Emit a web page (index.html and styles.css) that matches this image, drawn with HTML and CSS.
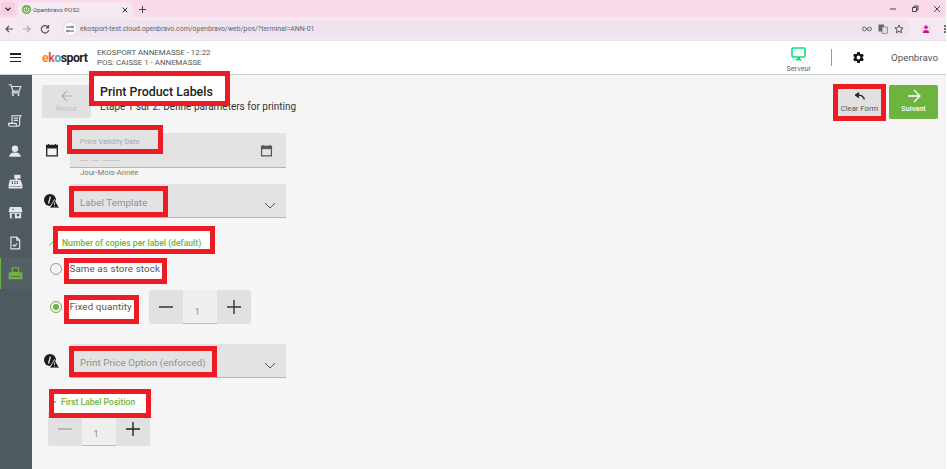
FILE: index.html
```html
<!DOCTYPE html>
<html lang="en">
<head>
<meta charset="utf-8">
<title>Openbravo POS2</title>
<link rel="stylesheet" href="styles.css">
</head>
<body>
<div class="page">
<div class="tabbar">
  <div class="tab-menu"><svg width="8" height="8" viewBox="0 0 8 8"><path d="M1.500 2.800l2.500 2.500 2.500-2.500" fill="none" stroke="#333" stroke-width="1.300"/></svg></div>
  <div class="tab">
    <svg class="favicon" width="9" height="9" viewBox="0 0 10 10"><circle cx="5" cy="5" r="5" fill="#6db33f"/><path d="M3.200 3.200a2.600 2.600 0 1 0 3.600 0M5 2v3" fill="none" stroke="#fff" stroke-width="1"/></svg>
    <span class="tab-title">Openbravo POS2</span>
    <svg class="tab-close" width="6" height="6" viewBox="0 0 6 6"><path d="M.7.700l4.600 4.600M5.300.700L.7 5.300" stroke="#333" stroke-width="1"/></svg>
  </div>
  <svg class="tab-new" width="7" height="7" viewBox="0 0 7 7"><path d="M3.500 0v7M0 3.500h7" stroke="#444" stroke-width="1"/></svg>
  <div class="win-controls">
    <svg width="8" height="8" viewBox="0 0 8 8"><path d="M1 4h6" stroke="#444" stroke-width="1"/></svg>
    <svg width="8" height="8" viewBox="0 0 8 8"><path d="M1.500 2.500h4v4h-4zM3 2.500v-1.500h4v4h-1" fill="none" stroke="#444" stroke-width="1"/></svg>
    <svg width="8" height="8" viewBox="0 0 8 8"><path d="M1 1l6 6M7 1l-6 6" stroke="#444" stroke-width="1"/></svg>
  </div>
</div>
<div class="toolbar">
  <svg width="10" height="10" viewBox="0 0 10 10"><path d="M9 5H2M5 2L2 5l3 3" fill="none" stroke="#555" stroke-width="1.200"/></svg>
  <svg width="10" height="10" viewBox="0 0 10 10"><path d="M1 5h7M5 2l3 3-3 3" fill="none" stroke="#aaa" stroke-width="1.200"/></svg>
  <svg width="10" height="10" viewBox="0 0 10 10"><path d="M8.300 3.500A3.700 3.700 0 1 0 8.700 6M8.500 1v2.800H5.800" fill="none" stroke="#555" stroke-width="1.200"/></svg>
  <div class="omnibox">
    <span class="site-icon"><svg width="8" height="8" viewBox="0 0 8 8"><path d="M0 2h5M7 2h1M0 6h1M3 6h5" stroke="#555" stroke-width="1"/><circle cx="6" cy="2" r="1" fill="none" stroke="#555" stroke-width=".8"/><circle cx="2" cy="6" r="1" fill="none" stroke="#555" stroke-width=".8"/></svg></span>
    <span class="url">ekosport-test.cloud.openbravo.com/openbravo/web/pos/?terminal=ANN-01</span>
    <span class="omni-actions">
      <svg width="10" height="6" viewBox="0 0 10 6"><circle cx="2.500" cy="3" r="1.900" fill="none" stroke="#666"/><circle cx="7.500" cy="3" r="1.900" fill="none" stroke="#666"/><path d="M4 3h2" stroke="#666"/></svg>
      <svg width="10" height="10" viewBox="0 0 10 10"><rect x="0.500" y="0.500" width="5.500" height="7" fill="#666"/><rect x="4" y="3" width="5.500" height="6.500" fill="#ddd" stroke="#666" stroke-width=".6"/></svg>
      <svg width="10" height="10" viewBox="0 0 10 10"><path d="M5 1l1.200 2.700 2.900.3-2.200 1.900.7 2.900L5 7.300 2.400 8.800l.7-2.900L.9 4l2.900-.3z" fill="none" stroke="#444" stroke-width=".9"/></svg>
    </span>
  </div>
  <span class="avatar"><svg width="8" height="8" viewBox="0 0 8 8"><circle cx="4" cy="2.300" r="1.700" fill="#c2188b"/><path d="M0.800 8c0-2 1.400-3 3.200-3s3.200 1 3.200 3z" fill="#c2188b"/></svg></span>
  <span class="kebab"><i></i><i></i><i></i></span>
</div>

<header class="app-header">
  <button class="hamburger" aria-label="Menu"><i></i><i></i><i></i></button>
  <div class="logo"><span class="logo-e">e</span><span class="logo-k">k</span><span class="logo-o">o</span><span class="logo-s">sport</span></div>
  <div class="store-info">
    <div>EKOSPORT ANNEMASSE - 12:22</div>
    <div>POS: CAISSE 1 - ANNEMASSE</div>
  </div>
  <div class="server">
    <svg width="15" height="14" viewBox="0 0 15 14"><rect x="1" y="1" width="13" height="9" rx="1" fill="none" stroke="#00e676" stroke-width="1.600"/><path d="M4.500 13.500h6V12h-6z" fill="#00e676"/><path d="M6 10h3v2H6z" fill="#00e676"/></svg>
    <span>Serveur</span>
  </div>
  <div class="header-divider"></div>
  <svg class="gear" width="13" height="13" viewBox="0 0 24 24"><path fill="#111" d="M19.400 13c.04-.3.100-.7.100-1s-.03-.7-.1-1l2.100-1.600c.2-.15.250-.4.120-.64l-2-3.460c-.12-.22-.4-.3-.6-.22l-2.500 1a7 7 0 0 0-1.700-1l-.4-2.650A.5.500 0 0 0 13.900 2h-4a.5.500 0 0 0-.5.420L9 5.070a7.700 7.700 0 0 0-1.700 1l-2.500-1c-.2-.08-.48 0-.6.220l-2 3.460c-.13.220-.07.490.12.640L4.500 11c-.05.3-.1.700-.1 1s.03.700.1 1l-2.100 1.600c-.2.150-.250.400-.12.640l2 3.460c.12.220.4.300.6.220l2.500-1c.5.400 1.100.700 1.700 1l.4 2.650c.04.240.25.420.5.420h4c.25 0 .46-.18.5-.42l.4-2.650a7.700 7.700 0 0 0 1.700-1l2.500 1c.22.080.48 0 .6-.22l2-3.460c.12-.22.070-.49-.12-.64zM12 15.500a3.500 3.500 0 1 1 0-7 3.500 3.500 0 0 1 0 7z"/></svg>
  <div class="user-name">Openbravo</div>
</header>

<div class="app-body">
  <nav class="sidebar">
    <a class="nav-item"><svg width="14" height="14" viewBox="0 0 24 24"><path fill="none" stroke="#e4e6e7" stroke-width="2" d="M1 3h4l3.500 11h10.500l3-8H6.500M8.500 14l-1.500 3h13"/><circle cx="8.500" cy="20.500" r="1.800" fill="#e4e6e7"/><circle cx="18" cy="20.500" r="1.800" fill="#e4e6e7"/></svg></a>
    <a class="nav-item"><svg width="14" height="14" viewBox="0 0 24 24"><path fill="none" stroke="#e4e6e7" stroke-width="2" d="M7 16V3h15l-2 3v12a3 3 0 0 1-3 3H4a3 3 0 0 1-3-3v-2h13v2a3 3 0 0 0 3 3M10 7h7M10 11h7"/></svg></a>
    <a class="nav-item"><svg width="14" height="14" viewBox="0 0 24 24"><circle cx="12" cy="8" r="5.500" fill="#e4e6e7"/><path fill="#e4e6e7" d="M2 22c0-5 4.500-7.500 10-7.500S22 17 22 22z"/></svg></a>
    <a class="nav-item"><svg width="15" height="15" viewBox="0 0 24 24"><path fill="#e4e6e7" d="M10 1h10v6h-5v2h5l3 8v6H1v-6l2-8h9V7h-2z"/><path fill="#4f5960" d="M6 11h2v2H6zM10 11h2v2h-2zM14 11h2v2h-2zM6 14h2v2H6zM10 14h2v2h-2zM14 14h2v2h-2zM3 19h18v1H3z"/></svg></a>
    <a class="nav-item"><svg width="15" height="15" viewBox="0 0 24 24"><path fill="#e4e6e7" d="M3 3h18l2 7a3 3 0 0 1-2 2.800V21H3v-8.200A3 3 0 0 1 1 10z"/><path fill="#4f5960" d="M6 14h5v7H6zM14 14h4v4h-4zM1 11h22v.8H1zM7 6h2v2H7z"/></svg></a>
    <a class="nav-item"><svg width="14" height="14" viewBox="0 0 24 24"><path fill="none" stroke="#e4e6e7" stroke-width="2" d="M5 2h10l5 5v15H5zM15 2v5h5M8.500 15l2.500 2.500 4.500-4.500"/></svg></a>
    <a class="nav-item nav-active"><svg width="15" height="15" viewBox="0 0 24 24"><path fill="#6db33f" d="M6 2h12v8h3a2 2 0 0 1 2 2v9H1v-9a2 2 0 0 1 2-2h3z"/><path fill="#4f5960" d="M8 4h8v5H8zM4 16h16v1H4z"/></svg></a>
  </nav>

  <main class="content">
    <div class="top-row">
      <button class="btn-back">
        <svg width="14" height="12" viewBox="0 0 16 14"><path d="M15 7H2M8 1L2 7l6 6" fill="none" stroke="#a9aeb0" stroke-width="1.300"/></svg>
        <span>Retour</span>
      </button>
      <div class="titles">
        <h1 class="above">Print Product Labels</h1>
        <p>Etape 1 sur 2. Define parameters for printing</p>
      </div>
      <div class="top-actions">
        <button class="btn-clear">
          <svg width="13" height="8" viewBox="0 0 13 9"><path d="M5.500.600L1.500 3.500l4 2.900z" fill="#222" stroke="#222" stroke-width="1"/><path d="M12 8.500C11 5 8.500 3.500 5.500 3.500" fill="none" stroke="#222" stroke-width="1.500"/></svg>
          <span>Clear Form</span>
        </button>
        <button class="btn-next">
          <svg width="14" height="14" viewBox="0 0 14 14"><path d="M1 7h11.500M7 1l6 6-6 6" fill="none" stroke="#fff" stroke-width="1.300"/></svg>
          <span>Suivant</span>
        </button>
      </div>
    </div>

    <div class="form">
      <div class="row-date">
        <svg class="field-icon" width="14" height="14" viewBox="0 0 14 14"><path d="M1.700 2.500h10.600v10.300H1.700z" fill="none" stroke="#222" stroke-width="1.300"/><path d="M1.500 2.500h11V5h-11zM3.500 1v2M10.500 1v2" stroke="#222" fill="#222"/></svg>
        <div class="field-col">
          <div class="field field-date">
            <div class="date-texts">
              <span class="field-small above">Price Validity Date</span>
              <span class="date-mask">__ __ ____</span>
            </div>
            <svg width="13" height="13" viewBox="0 0 14 14"><path d="M1.700 2.500h10.600v10.300H1.700z" fill="none" stroke="#555" stroke-width="1.300"/><path d="M1.500 2.500h11V5h-11zM3.500 1v2M10.500 1v2" stroke="#555" fill="#555"/></svg>
          </div>
          <div class="hint">Jour-Mois-Année</div>
        </div>
      </div>

      <div class="row-select">
        <svg class="field-icon" width="16" height="14" viewBox="0 0 16 14"><use href="#warn"/></svg>
        <div class="field field-select">
          <span class="field-label above">Label Template</span>
          <svg class="chevron" width="12" height="7" viewBox="0 0 12 7"><path d="M1 1l5 5 5-5" fill="none" stroke="#555" stroke-width="1"/></svg>
        </div>
      </div>

      <div class="section-title section-copies">
        <svg class="sec-check" width="5" height="5" viewBox="0 0 5 5"><path d="M0 4.500L4 1" stroke="#6db33f" stroke-width="1"/></svg>
        <span class="above">Number of copies per label (default)</span>
      </div>
      <div class="radio-row radio-first">
        <span class="radio"></span>
        <span class="radio-label above">Same as store stock</span>
      </div>
      <div class="radio-row radio-second">
        <span class="radio radio-on"></span>
        <span class="radio-label above">Fixed quantity</span>
        <div class="stepper stepper-a">
          <span class="step-btn"><svg width="14" height="2" viewBox="0 0 14 2"><path d="M0 1h14" stroke="#333" stroke-width="1.400"/></svg></span>
          <span class="step-value">1</span>
          <span class="step-btn"><svg width="14" height="14" viewBox="0 0 14 14"><path d="M0 7h14M7 0v14" stroke="#333" stroke-width="1.400"/></svg></span>
        </div>
      </div>

      <div class="row-select row-price">
        <svg class="field-icon" width="16" height="14" viewBox="0 0 16 14"><use href="#warn"/></svg>
        <div class="field field-select">
          <span class="field-label above">Print Price Option (enforced)</span>
          <svg class="chevron" width="12" height="7" viewBox="0 0 12 7"><path d="M1 1l5 5 5-5" fill="none" stroke="#555" stroke-width="1"/></svg>
        </div>
      </div>

      <div class="section-title section-position">
        <i class="sec-dot above"></i>
        <span class="above">First Label Position</span>
      </div>
      <div class="stepper stepper-b">
        <span class="step-btn"><svg width="14" height="2" viewBox="0 0 14 2"><path d="M0 1h14" stroke="#aaa" stroke-width="1.400"/></svg></span>
        <span class="step-value">1</span>
        <span class="step-btn"><svg width="14" height="14" viewBox="0 0 14 14"><path d="M0 7h14M7 0v14" stroke="#222" stroke-width="1.400"/></svg></span>
      </div>
    </div>
  </main>
</div>
</div>

<svg class="defs" width="0" height="0"><defs>
  <g id="warn"><circle cx="6" cy="6" r="6" fill="#1a1a1a"/><path d="M6.500 2.500L4.500 9.500" fill="none" stroke="#f5f5f5" stroke-width="1.200"/><path d="M10.500 5.500l5 8.500h-10z" fill="#1a1a1a" stroke="#f5f5f5" stroke-width=".8"/><path d="M10.500 8.500v2.500M10.500 11.800v1" stroke="#f5f5f5" stroke-width=".8"/></g>
</defs></svg>

<div class="mark m-title"></div>
<div class="mark m-clear"></div>
<div class="mark m-date"></div>
<div class="mark m-template"></div>
<div class="mark m-copies"></div>
<div class="mark m-same"></div>
<div class="mark m-fixed"></div>
<div class="mark m-price"></div>
<div class="mark m-first"></div>
</body>
</html>
```
FILE: styles.css
```css
* { box-sizing: border-box; }
html, body { margin: 0; height: 100%; }
body {
  position: relative;
  width: 947px;
  height: 469px;
  overflow: hidden;
  font-family: Roboto, "Liberation Sans", sans-serif;
  background: #fff;
  color: #222;
}
.page { width: 946px; height: 469px; background: #f5f5f5; }
button { font-family: inherit; border: 0; padding: 0; }
.defs { position: absolute; }
.above { position: relative; z-index: 2; }

/* Browser chrome */
.tabbar {
  height: 17px;
  background: #fad9ea;
  display: flex;
  align-items: flex-end;
  padding-left: 1px;
}
.tab-menu {
  width: 14px; height: 13px; margin-bottom: 2px;
  background: #f5cfe2; border-radius: 4px;
  display: flex; align-items: center; justify-content: center;
}
.tab {
  width: 115px; height: 15px; margin-left: 3px;
  background: #f4e8f1; border-radius: 5px 5px 0 0;
  display: flex; align-items: center; padding-left: 4px; gap: 2px;
}
.tab-title { font-size: 6.200px; color: #555; flex: 1; }
.tab-close { margin-right: 5px; }
.tab-new { margin: 0 0 4px 6px; }
.win-controls { margin-left: auto; display: flex; gap: 14px; align-self: center; padding-right: 5px; }
.toolbar {
  height: 24px;
  background: #f4e8f1;
  display: flex;
  align-items: center;
  padding-left: 4px;
  gap: 8px;
  border-bottom: 1px solid #e8e0e6;
}
.omnibox {
  width: 850px; height: 17px; margin-left: 3px; margin-right: 2px; flex: none;
  background: #efe3ee; border-radius: 9px;
  display: flex; align-items: center;
  padding-left: 3px;
}
.site-icon {
  width: 12px; height: 12px; border-radius: 50%; background: #fff; flex: none;
  display: flex; align-items: center; justify-content: center;
}
.url { font-size: 6.950px; color: #5f6368; margin-left: 4px; white-space: nowrap; }
.omni-actions { margin-left: auto; display: flex; align-items: center; gap: 6px; padding-right: 7px; }
.avatar {
  width: 10px; height: 10px; border-radius: 50%; background: #f5d7ea;
  display: flex; align-items: center; justify-content: center;
  flex: none;
}
.kebab { display: flex; flex-direction: column; gap: 1px; margin-left: 5px; flex: none; }
.kebab i { width: 2px; height: 2px; border-radius: 50%; background: #444; display: block; }

/* App header */
.app-header {
  height: 34px;
  background: #fff;
  border-bottom: 1px solid #cfcfcf;
  display: flex;
  align-items: center;
}
.hamburger {
  width: 11px; height: 9px; margin-left: 10px; background: none; flex: none;
  display: flex; flex-direction: column; justify-content: space-between;
}
.hamburger i { display: block; height: 1.500px; background: #222; }
.logo { margin-left: 21px; font-size: 12.300px; font-weight: 700; letter-spacing: -.5px; width: 45px; }
.logo-e { color: #f0862d; }
.logo-k { color: #e8503a; }
.logo-o { color: #4aa8d8; }
.logo-s { color: #222; }
.store-info { margin-left: 10px; font-size: 7.900px; line-height: 10px; color: #555; }
.server {
  margin-left: auto;
  display: flex; flex-direction: column; align-items: center; gap: 3px;
  font-size: 7.300px; color: #666; margin-top: 4px;
}
.header-divider { width: 1px; height: 17px; background: #999; margin-left: 20px; }
.gear { margin-left: 20px; }
.user-name { font-size: 9.800px; color: #555; margin-left: 26px; margin-right: 8px; }

/* Body */
.app-body { display: flex; height: 394px; }
.sidebar { width: 32px; background: #4f5960; flex: none; display: flex; flex-direction: column; }
.nav-item { height: 30.500px; display: flex; align-items: center; justify-content: center; }
.nav-item svg { margin-right: 2px; }
.nav-active { border-left: 1px solid #6db33f; background: #555f66; }
.content { flex: 1; padding: 10px 8px 0 10px; }

.top-row { display: flex; align-items: flex-start; }
.btn-back {
  width: 49px; height: 33px; background: #e1e1e1; border-radius: 2px;
  display: flex; flex-direction: column; align-items: center; justify-content: center; gap: 2px;
  font-size: 7.400px; color: #bfc2c3;
}
.titles { margin-left: 9px; }
h1 { margin: 0; font-size: 12.400px; font-weight: 500; color: #222; line-height: 13px; }
.titles p { margin: 2px 0 0; font-size: 10px; line-height: 13px; color: #333; }
.top-actions { margin-left: auto; display: flex; gap: 5px; }
.btn-clear, .btn-next {
  width: 49px; height: 34px; border-radius: 2px;
  display: flex; flex-direction: column; align-items: center; justify-content: center;
  font-size: 7.700px;
}
.btn-clear { background: #e1e1e1; color: #555; gap: 4px; padding-top: 1px; }
.btn-next { background: #6db33f; color: #fff; font-weight: 500; font-size: 7.300px; gap: 1px; padding-bottom: 2px; }

.form { display: flex; flex-direction: column; }
.row-date { display: flex; align-items: flex-start; margin-top: 14px; }
.field-icon { flex: none; margin-left: 3px; }
.row-date .field-icon { margin-top: 10px; margin-right: 11px; }
.field {
  background: #e3e3e3; border-bottom: 1px solid #b5b5b5;
  width: 216px; display: flex;
}
.field-date { height: 35px; align-items: center; justify-content: space-between; padding: 0 13px 0 10px; }
.date-texts { display: flex; flex-direction: column; margin-top: -2px; }
.field-small { font-size: 7.400px; color: #a7a7a7; line-height: 10px; }
.date-mask { font-size: 9px; color: #bdbdbd; line-height: 10px; margin-top: 5px; letter-spacing: .3px; }
.hint { font-size: 7.700px; color: #777; line-height: 10px; margin: 0 0 0 10px; }
.row-select { display: flex; align-items: center; margin-top: 6px; }
.row-select .field-icon { margin-right: 10px; margin-left: 2px; }
.field-select { height: 34px; align-items: center; padding: 0 10px; justify-content: space-between; }
.field-label { font-size: 9.700px; color: #8f8f8f; letter-spacing: .1px; margin-top: 3px; }
.chevron { margin-top: 10px; }
.section-title { font-size: 8.650px; font-weight: 500; color: #6db33f; margin-left: 7px; line-height: 12px; display: flex; align-items: center; }
.sec-check { margin-right: 8px; flex: none; }
.sec-dot { width: 2px; height: 2px; background: #6db33f; border-radius: 50%; margin: 0 5px 0 5px; }
.section-copies { margin-top: 19px; }
.radio-row { display: flex; align-items: center; margin-left: 8px; }
.radio-first { margin-top: 13px; height: 14px; }
.radio-second { margin-top: 14px; height: 34px; }
.radio {
  width: 12px; height: 12px; border-radius: 50%; border: 1px solid #9a9a9a; flex: none;
  display: flex; align-items: center; justify-content: center;
}
.radio-on { border: 1.200px solid #6db33f; }
.radio-on::after { content: ""; width: 6px; height: 6px; border-radius: 50%; background: #6db33f; }
.radio-label { font-size: 9.800px; color: #555; margin-left: 7.500px; letter-spacing: .1px; margin-bottom: 2px; }
.stepper { display: flex; height: 34px; width: 102px; border-radius: 2px; overflow: hidden; flex: none; }
.stepper-a { margin-left: 17.500px; }
.stepper-b { margin: 4px 0 0 6px; }
.step-btn { width: 34px; background: #e1e1e1; display: flex; align-items: center; justify-content: center; }
.step-value {
  width: 34px; background: #efefef; border-bottom: 1px solid #bbb;
  font-size: 9px; color: #888; text-align: center; padding: 17px 6px 0 0; line-height: 10px;
}
.row-price { margin-top: 20px; }
.section-position { margin-top: 18px; }

/* Red annotation boxes */
.mark { position: absolute; border: 5px solid #ed1c24; background: transparent; }
.m-title { left: 89px; top: 71px; width: 141px; height: 35px; background: #fff; }
.m-clear { left: 833px; top: 84px; width: 53px; height: 37px; }
.m-date { left: 67px; top: 125px; width: 96px; height: 29px; background: #e3e3e3; }
.m-template { left: 69px; top: 186px; width: 99px; height: 31px; }
.m-copies { left: 53px; top: 226px; width: 162px; height: 28px; background: #fff; }
.m-same { left: 64px; top: 258px; width: 103px; height: 26px; background: #fff; }
.m-fixed { left: 64px; top: 295px; width: 75px; height: 29px; background: #fff; }
.m-price { left: 69px; top: 346px; width: 148px; height: 31px; }
.m-first { left: 49px; top: 389px; width: 102px; height: 29px; background: #fff; }
```
